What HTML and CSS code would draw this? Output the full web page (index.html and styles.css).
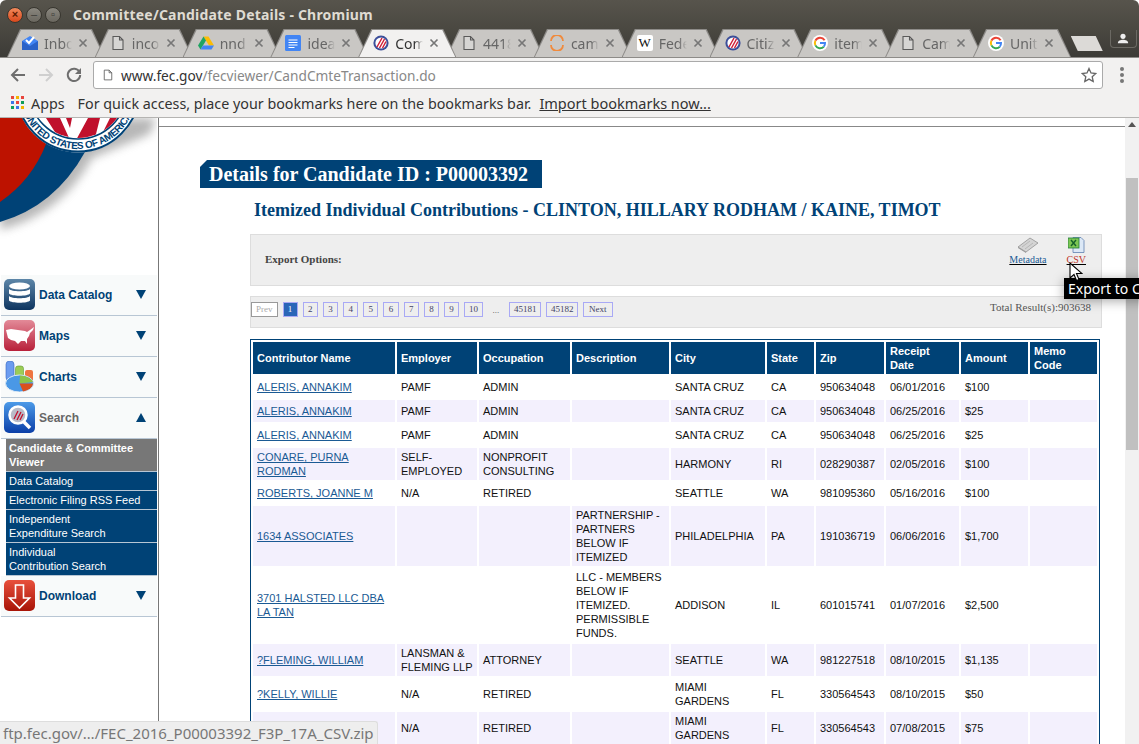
FILE: index.html
```html
<!DOCTYPE html>
<html lang="en" dir="ltr">
<head>
  <meta charset="UTF-8">
  <meta name="viewport" content="width=device-width, initial-scale=1.0">
  <title>Committee/Candidate Details - Chromium</title>
  <link rel="stylesheet" href="styles.css">
</head>
<body>
  <svg class="defs" width="0" height="0">
    <symbol id="i-doc" viewBox="0 0 16 16"><path d="M3 1.5h6.5L13 5v9.5H3z M9.5 1.5V5H13" fill="#fff" fill-opacity="0.25" stroke="#5a5a5a" stroke-width="1.1"/></symbol>
    <symbol id="i-fec" viewBox="0 0 16 16"><circle cx="8" cy="8" r="7.6" fill="#3c4f9a"/><circle cx="8" cy="8" r="5.6" fill="#fff"/><path d="M4 12L9 3M6.5 13L11.5 4M9.5 13L13 6.5" stroke="#d0213a" stroke-width="1.5"/></symbol>
    <symbol id="i-g" viewBox="0 0 16 16"><circle cx="8" cy="8" r="8" fill="#fff"/><path d="M12.6 5.2A5.3 5.3 0 0 0 3.4 5.6" fill="none" stroke="#ea4335" stroke-width="2"/><path d="M3.4 5.6a5.3 5.3 0 0 0 0 4.8" fill="none" stroke="#fbbc05" stroke-width="2"/><path d="M3.4 10.4A5.3 5.3 0 0 0 11.8 11.7" fill="none" stroke="#34a853" stroke-width="2"/><path d="M8 8h5c0 1.500-.4 2.800-1.200 3.700" fill="none" stroke="#4285f4" stroke-width="2"/></symbol>
    <symbol id="i-x" viewBox="0 0 10 10"><path d="M1.500 1.500l7 7M8.500 1.500l-7 7" stroke="#777" stroke-width="1.700"/></symbol>
  </svg>

  <div class="window">
    <div class="titlebar">
      <span class="dot dot-close">×</span>
      <span class="dot dot-min">–</span>
      <span class="dot dot-max">▫</span>
      <span class="wintitle">Committee/Candidate Details - Chromium</span>
    </div>

    <div class="tabstrip">
      <div class="tab">
        <svg class="favicon" viewBox="0 0 16 16"><path d="M0 6l8-5 8 5v9H0z" fill="#4285f4"/><path d="M0 6l8 5 8-5v9H0z" fill="#2a62c8"/><path d="M4 5l3 3 5-6" fill="none" stroke="#fff" stroke-width="2"/></svg>
        <span class="tabtext">Inbox</span>
        <svg class="tabclose"><use href="#i-x"/></svg>
      </div>
      <div class="tab">
        <svg class="favicon"><use href="#i-doc"/></svg>
        <span class="tabtext">income</span>
        <svg class="tabclose"><use href="#i-x"/></svg>
      </div>
      <div class="tab">
        <svg class="favicon" viewBox="0 0 16 16"><path d="M5.500 1.500h5L16 10.500h-5z" fill="#fbbc05"/><path d="M5.500 1.500L0 10.500l2.500 4L8 5.500z" fill="#1fa463"/><path d="M2.500 14.500h11L16 10.500H5z" fill="#4285f4"/></svg>
        <span class="tabtext">nnd</span>
        <svg class="tabclose"><use href="#i-x"/></svg>
      </div>
      <div class="tab">
        <svg class="favicon" viewBox="0 0 16 16"><rect width="16" height="16" rx="1.500" fill="#4285f4"/><path d="M3.500 5h9M3.500 7.500h9M3.500 10h9M3.500 12.500h6" stroke="#fff"/></svg>
        <span class="tabtext">ideas</span>
        <svg class="tabclose"><use href="#i-x"/></svg>
      </div>
      <div class="tab tab-active">
        <svg class="favicon"><use href="#i-fec"/></svg>
        <span class="tabtext">Committee</span>
        <svg class="tabclose"><use href="#i-x"/></svg>
      </div>
      <div class="tab">
        <svg class="favicon"><use href="#i-doc"/></svg>
        <span class="tabtext">4418</span>
        <svg class="tabclose"><use href="#i-x"/></svg>
      </div>
      <div class="tab">
        <svg class="favicon" viewBox="0 0 16 16"><path d="M2 6a6 6 0 0 1 12 0M14 10a6 6 0 0 1-12 0" fill="none" stroke="#f08a3c" stroke-width="1.800"/></svg>
        <span class="tabtext">camp</span>
        <svg class="tabclose"><use href="#i-x"/></svg>
      </div>
      <div class="tab">
        <span class="favicon fav-w">W</span>
        <span class="tabtext">Federal</span>
        <svg class="tabclose"><use href="#i-x"/></svg>
      </div>
      <div class="tab">
        <svg class="favicon"><use href="#i-fec"/></svg>
        <span class="tabtext">Citizens</span>
        <svg class="tabclose"><use href="#i-x"/></svg>
      </div>
      <div class="tab">
        <svg class="favicon"><use href="#i-g"/></svg>
        <span class="tabtext">itemized</span>
        <svg class="tabclose"><use href="#i-x"/></svg>
      </div>
      <div class="tab">
        <svg class="favicon"><use href="#i-doc"/></svg>
        <span class="tabtext">Campaign</span>
        <svg class="tabclose"><use href="#i-x"/></svg>
      </div>
      <div class="tab">
        <svg class="favicon"><use href="#i-g"/></svg>
        <span class="tabtext">United</span>
        <svg class="tabclose"><use href="#i-x"/></svg>
      </div>
      <div class="newtab"></div>
      <div class="profile">
        <svg width="12" height="11" viewBox="0 0 14 12"><circle cx="7" cy="3.500" r="3" fill="#eee"/><path d="M1 11.500c0-3 3-4 6-4s6 1 6 4z" fill="#eee"/></svg>
      </div>
    </div>

    <div class="toolbar">
      <svg class="navicon" viewBox="0 0 16 16"><path d="M15 8H2M8 2L2 8l6 6" fill="none" stroke="#6e6e6e" stroke-width="2"/></svg>
      <svg class="navicon" viewBox="0 0 16 16"><path d="M1 8h13M8 2l6 6-6 6" fill="none" stroke="#cfcfcf" stroke-width="2"/></svg>
      <svg class="navicon" viewBox="0 0 16 16"><path d="M13.500 5A6.200 6.200 0 1 0 14.200 8" fill="none" stroke="#6e6e6e" stroke-width="2"/><path d="M15 1v6H9z" fill="#6e6e6e"/></svg>
      <div class="omnibox">
        <svg class="omni-doc" width="12" height="14"><use href="#i-doc"/></svg>
        <span class="url"><b>www.fec.gov</b>/fecviewer/CandCmteTransaction.do</span>
        <svg class="star" width="16" height="16" viewBox="0 0 16 16"><path d="M8 1.500l2 4.500 4.800.5-3.600 3.200 1 4.800L8 12.100l-4.200 2.400 1-4.800L1.200 6.500 6 6z" fill="none" stroke="#666" stroke-width="1.300"/></svg>
      </div>
      <div class="menudots"><i></i><i></i><i></i></div>
    </div>

    <div class="bookmarks">
      <svg class="appsgrid" width="13" height="14" viewBox="0 0 13 14">
        <path d="M0 0h3v3H0z" fill="#e8453c"/><path d="M5 0h3v3H5z" fill="#f4b400"/><path d="M10 0h3v3h-3z" fill="#e8453c"/>
        <path d="M0 5h3v3H0z" fill="#3b78e7"/><path d="M5 5h3v3H5z" fill="#e8453c"/><path d="M10 5h3v3h-3z" fill="#0f9d58"/>
        <path d="M0 10h3v3H0z" fill="#0f9d58"/><path d="M5 10h3v3H5z" fill="#3b78e7"/><path d="M10 10h3v3h-3z" fill="#f4b400"/>
      </svg>
      <span class="apps">Apps</span>
      <span class="bm-hint">For quick access, place your bookmarks here on the bookmarks bar.</span>
      <span class="bm-link">Import bookmarks now...</span>
    </div>

    <div class="page">
      <aside class="sidebar">
        <svg class="seal" width="157" height="157" viewBox="0 0 157 157">
          <defs>
            <filter id="blur5"><feGaussianBlur stdDeviation="5"/></filter>
            <clipPath id="sealinner"><circle cx="78" cy="-28" r="48"/></clipPath>
            <path id="sealarc" d="M19 -28 A59 59 0 0 0 137 -28"/>
          </defs>
          <path d="M0 112Q62 96 92 40L150 16L156 0H0z" fill="#888" opacity="0.6" filter="url(#blur5)"/>
          <path d="M0 104Q55 88 85 34L60 0H0z" fill="#004276"/>
          <path d="M0 84Q32 62 46 26L30 0H0z" fill="#bd1200"/>
          <circle cx="78" cy="-28" r="62.500" fill="#fff"/>
          <circle cx="78" cy="-28" r="61.500" fill="none" stroke="#004276" stroke-width="2"/>
          <circle cx="78" cy="-28" r="49" fill="#fff" stroke="#004276" stroke-width="1.500"/>
          <g clip-path="url(#sealinner)">
            <path d="M46 0H60L70 22H60zM66 0H72L70 10zM88 0H100L94 24H75zM110 0H122L106 24H98z" fill="#c0102c"/>
          </g>
          <text class="seal-text" textLength="135"><textPath href="#sealarc" startOffset="13.500%">UNITED STATES OF AMERICA</textPath></text>
        </svg>

        <nav class="menu">
          <div class="menu-item">
            <svg class="menu-icon" viewBox="0 0 31 31">
              <defs><linearGradient id="gnavy" x1="0" y1="0" x2="0" y2="1"><stop offset="0" stop-color="#5d86a8"/><stop offset="1" stop-color="#0e3560"/></linearGradient></defs>
              <rect width="31" height="31" rx="5" fill="url(#gnavy)"/>
              <ellipse cx="15.500" cy="7" rx="10.500" ry="3.500" fill="#fff"/>
              <path d="M5 10c2 3 19 3 21 0v4.500c-2 3-19 3-21 0zM5 17c2 3 19 3 21 0v4.500c-2 3-19 3-21 0z" fill="#fff"/>
            </svg>
            <span class="menu-label">Data Catalog</span>
            <span class="arrow-down"></span>
          </div>
          <div class="menu-item">
            <svg class="menu-icon" viewBox="0 0 31 31">
              <defs><linearGradient id="gred" x1="0" y1="0" x2="0" y2="1"><stop offset="0" stop-color="#e38a98"/><stop offset="1" stop-color="#b8203a"/></linearGradient></defs>
              <rect width="31" height="31" rx="5" fill="url(#gred)"/>
              <path d="M2 10L7 9L14 10L21 11L23 12L26 10L30 7L29 10L26 13L25 16L23 19L23 24L21 21L17 21L14 24L11 21L7 20L4 18z" fill="#fff"/>
            </svg>
            <span class="menu-label">Maps</span>
            <span class="arrow-down"></span>
          </div>
          <div class="menu-item">
            <svg class="menu-icon" viewBox="0 0 31 31">
              <rect x="2" y="0" width="8" height="20" rx="3.500" fill="#6b9cf0" stroke="#3566c0" stroke-width="0.600"/>
              <rect x="11.500" y="5" width="8" height="14" rx="2.500" fill="#9ccc55" stroke="#5f9a30" stroke-width="0.600"/>
              <rect x="21" y="9" width="8" height="12" rx="2" fill="#ee7440"/>
              <ellipse cx="15.500" cy="22.500" rx="14" ry="8.500" fill="#4a98e6" stroke="#dbe8f5"/>
              <path d="M15.500 22.500L16 14.500A14 8.500 0 0 1 29 21z" fill="#8bc34a"/>
              <path d="M15.500 22.500H29A14 8.500 0 0 1 19 30.500z" fill="#d9501e"/>
            </svg>
            <span class="menu-label">Charts</span>
            <span class="arrow-down"></span>
          </div>
          <div class="menu-item menu-open">
            <svg class="menu-icon" viewBox="0 0 31 31">
              <defs><linearGradient id="gblue" x1="0" y1="0" x2="0" y2="1"><stop offset="0" stop-color="#4c9ae8"/><stop offset="1" stop-color="#0b3fa8"/></linearGradient></defs>
              <rect width="31" height="31" rx="5" fill="url(#gblue)"/>
              <path d="M19 19l7 7" stroke="#fff" stroke-width="3.500"/>
              <circle cx="14" cy="13" r="8.500" fill="#b9bcc8" stroke="#fff" stroke-width="2.500"/>
              <path d="M10 17l4-8M13 18l4-8M16 18l3-6" stroke="#c0102c" stroke-width="1.300"/>
            </svg>
            <span class="menu-label">Search</span>
            <span class="arrow-up"></span>
          </div>
          <ul class="submenu">
            <li class="sub-active">Candidate &amp; Committee Viewer</li>
            <li>Data Catalog</li>
            <li>Electronic Filing RSS Feed</li>
            <li>Independent<br>Expenditure Search</li>
            <li>Individual<br>Contribution Search</li>
          </ul>
          <div class="menu-item">
            <svg class="menu-icon" viewBox="0 0 31 31">
              <defs><linearGradient id="gdl" x1="0" y1="0" x2="0" y2="1"><stop offset="0" stop-color="#e8503c"/><stop offset="1" stop-color="#a81408"/></linearGradient></defs>
              <rect width="31" height="31" rx="5" fill="url(#gdl)"/>
              <path d="M11.500 5h8v13h6L15.500 28 5.500 18h6z" fill="none" stroke="#fff" stroke-width="1.600"/>
            </svg>
            <span class="menu-label">Download</span>
            <span class="arrow-down"></span>
          </div>
        </nav>
      </aside>

      <main class="content">
        <div class="topline"></div>
        <h1 class="page-title">Details for Candidate ID : P00003392</h1>
        <h2 class="sub-title">Itemized Individual Contributions - CLINTON, HILLARY RODHAM / KAINE, TIMOT</h2>

        <div class="export-box">
          <span class="export-label">Export Options:</span>
          <div class="export-links">
            <a class="export-link">
              <svg width="22" height="16" viewBox="0 0 22 16"><path d="M1 10L13 1l8 5-12 9z" fill="#d4d4d4" stroke="#888" stroke-width="0.700"/><path d="M1 10l8 5v1l-8-5z" fill="#999"/><path d="M5 10l8-6M8 12l8-6" stroke="#aaa" stroke-width="0.700"/></svg>
              <span class="link-meta">Metadata</span>
            </a>
            <a class="export-link">
              <svg width="17" height="16" viewBox="0 0 17 16"><path d="M5 .5h8l3 3v12H5z" fill="#dce8f6" stroke="#5f82b0" stroke-width="0.800"/><rect x="0" y="1" width="11" height="10" fill="#7cc653" stroke="#1f7a3a" stroke-width="0.800"/><path d="M3 3l5 6M8 3l-5 6" stroke="#14602a" stroke-width="1.400"/></svg>
              <span class="link-csv">CSV</span>
            </a>
          </div>
        </div>

        <div class="pager-box">
          <div class="pager">
            <span class="pg pg-prev">Prev</span>
            <span class="pg pg-on">1</span>
            <span class="pg">2</span>
            <span class="pg">3</span>
            <span class="pg">4</span>
            <span class="pg">5</span>
            <span class="pg">6</span>
            <span class="pg">7</span>
            <span class="pg">8</span>
            <span class="pg">9</span>
            <span class="pg">10</span>
            <span class="pg-dots">...</span>
            <span class="pg">45181</span>
            <span class="pg">45182</span>
            <span class="pg pg-next">Next</span>
          </div>
          <span class="total">Total Result(s):903638</span>
        </div>

        <table class="results">
          <colgroup>
            <col class="c-name"><col class="c-emp"><col class="c-occ"><col class="c-desc"><col class="c-city">
            <col class="c-state"><col class="c-zip"><col class="c-date"><col class="c-amt"><col class="c-memo">
          </colgroup>
          <thead>
            <tr><th>Contributor Name</th><th>Employer</th><th>Occupation</th><th>Description</th><th>City</th><th>State</th><th>Zip</th><th>Receipt Date</th><th>Amount</th><th>Memo Code</th></tr>
          </thead>
          <tbody>
            <tr><td><a>ALERIS, ANNAKIM</a></td><td>PAMF</td><td>ADMIN</td><td></td><td>SANTA CRUZ</td><td>CA</td><td>950634048</td><td>06/01/2016</td><td>$100</td><td></td></tr>
            <tr><td><a>ALERIS, ANNAKIM</a></td><td>PAMF</td><td>ADMIN</td><td></td><td>SANTA CRUZ</td><td>CA</td><td>950634048</td><td>06/25/2016</td><td>$25</td><td></td></tr>
            <tr><td><a>ALERIS, ANNAKIM</a></td><td>PAMF</td><td>ADMIN</td><td></td><td>SANTA CRUZ</td><td>CA</td><td>950634048</td><td>06/25/2016</td><td>$25</td><td></td></tr>
            <tr><td><a>CONARE, PURNA RODMAN</a></td><td>SELF-EMPLOYED</td><td>NONPROFIT CONSULTING</td><td></td><td>HARMONY</td><td>RI</td><td>028290387</td><td>02/05/2016</td><td>$100</td><td></td></tr>
            <tr><td><a>ROBERTS, JOANNE M</a></td><td>N/A</td><td>RETIRED</td><td></td><td>SEATTLE</td><td>WA</td><td>981095360</td><td>05/16/2016</td><td>$100</td><td></td></tr>
            <tr><td><a>1634 ASSOCIATES</a></td><td></td><td></td><td>PARTNERSHIP - PARTNERS BELOW IF ITEMIZED</td><td>PHILADELPHIA</td><td>PA</td><td>191036719</td><td>06/06/2016</td><td>$1,700</td><td></td></tr>
            <tr><td><a>3701 HALSTED LLC DBA LA TAN</a></td><td></td><td></td><td>LLC - MEMBERS BELOW IF ITEMIZED. PERMISSIBLE FUNDS.</td><td>ADDISON</td><td>IL</td><td>601015741</td><td>01/07/2016</td><td>$2,500</td><td></td></tr>
            <tr><td><a>?FLEMING, WILLIAM</a></td><td>LANSMAN &amp; FLEMING LLP</td><td>ATTORNEY</td><td></td><td>SEATTLE</td><td>WA</td><td>981227518</td><td>08/10/2015</td><td>$1,135</td><td></td></tr>
            <tr><td><a>?KELLY, WILLIE</a></td><td>N/A</td><td>RETIRED</td><td></td><td>MIAMI GARDENS</td><td>FL</td><td>330564543</td><td>08/10/2015</td><td>$50</td><td></td></tr>
            <tr><td><a>?KELLY, WILLIE</a></td><td>N/A</td><td>RETIRED</td><td></td><td>MIAMI GARDENS</td><td>FL</td><td>330564543</td><td>07/08/2015</td><td>$75</td><td></td></tr>
          </tbody>
        </table>
      </main>

      <div class="scrollbar">
        <span class="scroll-up"></span>
        <div class="scroll-thumb"></div>
      </div>
    </div>

    <div class="tooltip">Export to CSV</div>
    <svg class="cursor" width="14" height="20" viewBox="0 0 14 20"><path d="M1 1v15l4-3.500 2.500 6 2.500-1-2.500-6H13z" fill="#fff" stroke="#000" stroke-width="1.100"/></svg>
    <div class="statusbubble">ftp.fec.gov/…/FEC_2016_P00003392_F3P_17A_CSV.zip</div>
  </div>
</body>
</html>
```

FILE: styles.css
```css
* {
  box-sizing: border-box;
}
html, body {
  margin: 0;
  padding: 0;
  background: white;
}
.defs {
  position: absolute;
}
.window {
  position: relative;
  width: 1139px;
  height: 744px;
  overflow: hidden;
  display: flex;
  flex-direction: column;
  font-family: "Liberation Sans", Arial, sans-serif;
}

/* browser chrome */
.titlebar {
  height: 29px;
  display: flex;
  align-items: center;
  padding-left: 7px;
  background: linear-gradient(#57544c, #4a4841);
  border-radius: 6px 6px 0 0;
}
.dot {
  width: 16px;
  height: 16px;
  border-radius: 50%;
  margin-right: 3px;
  display: flex;
  align-items: center;
  justify-content: center;
  font-size: 11px;
  line-height: 1;
  color: #3c3b37;
  background: linear-gradient(#8a877f, #6a675f);
  border: 1px solid #38362f;
}
.dot-close {
  background: linear-gradient(#f28a5c, #d9481c);
  color: #5a1a00;
  font-weight: bold;
}
.wintitle {
  margin-left: 9px;
  font-family: "Noto Sans", sans-serif;
  font-weight: bold;
  font-size: 14px;
  letter-spacing: 0.2px;
  color: #dfdbd2;
}
.tabstrip {
  height: 28px;
  display: flex;
  padding-left: 7px;
  background: linear-gradient(#4a4841, #3c3b37);
}
.tab {
  position: relative;
  width: 98px;
  height: 28px;
  margin-right: -10.200px;
  padding-left: 15px;
  display: flex;
  align-items: center;
  background: #8d8b88;
  clip-path: polygon(0 100%, 13px 0, calc(100% - 13px) 0, 100% 100%);
}
.tab::before {
  content: "";
  position: absolute;
  inset: 1px 1px 0 1px;
  background: #c9c7c4;
  clip-path: polygon(0 100%, 13px 0, calc(100% - 13px) 0, 100% 100%);
}
.tab > * {
  position: relative;
}
.tab-active {
  z-index: 2;
}
.tab-active::before {
  background: #f2f1f0;
}
.favicon {
  width: 16px;
  height: 16px;
  flex: none;
}
.fav-w {
  background: white;
  border-radius: 2px;
  font-family: "Liberation Serif", serif;
  font-size: 13px;
  line-height: 16px;
  text-align: center;
  color: #111;
}
.tabtext {
  width: 28px;
  margin-left: 6px;
  overflow: hidden;
  white-space: nowrap;
  font-family: "Noto Sans", sans-serif;
  font-size: 14px;
  color: #666;
  -webkit-mask-image: linear-gradient(to right, black 70%, transparent);
  mask-image: linear-gradient(to right, black 70%, transparent);
}
.tab-active .tabtext {
  color: #333;
}
.tabclose {
  width: 10px;
  height: 10px;
  margin-left: 6px;
}
.newtab {
  width: 32px;
  height: 15px;
  margin: 7px 0 0 10px;
  background: #dcdad7;
  clip-path: polygon(0 0, 25px 0, 100% 100%, 7px 100%);
}
.profile {
  width: 27px;
  height: 18px;
  margin: 1px 0 0 7px;
  display: flex;
  align-items: center;
  justify-content: center;
  border: 1px solid #6b6963;
  border-top: none;
  border-radius: 0 0 4px 4px;
}
.toolbar {
  height: 32px;
  display: flex;
  align-items: center;
  padding: 3px 0 0 10px;
  background: #f2f1f0;
  border-top: 1px solid #8d8b88;
}
.navicon {
  width: 16px;
  height: 16px;
  margin-right: 12px;
}
.omnibox {
  width: 1010px;
  height: 28px;
  margin-left: -1px;
  display: flex;
  align-items: center;
  padding: 0 5px 0 8px;
  background: white;
  border: 1px solid #aaa;
  border-radius: 3px;
}
.omni-doc {
  margin-right: 7px;
}
.url {
  font-family: "Noto Sans", sans-serif;
  font-size: 13.700px;
  color: #888;
}
.url b {
  font-weight: normal;
  color: #333;
}
.star {
  margin-left: auto;
}
.menudots {
  margin-left: 17px;
  display: flex;
  flex-direction: column;
  gap: 2px;
}
.menudots i {
  width: 4px;
  height: 4px;
  border-radius: 50%;
  background: #777;
}
.bookmarks {
  height: 29px;
  display: flex;
  align-items: center;
  padding-left: 11px;
  background: #f2f1f0;
  border-bottom: 1px solid #b5b4b2;
  font-family: "Noto Sans", sans-serif;
  font-size: 14.300px;
  color: #333;
}
.apps {
  margin-left: 7px;
}
.bm-hint {
  margin-left: 13px;
}
.bm-link {
  margin-left: 8px;
  font-size: 14.500px;
  text-decoration: underline;
}

/* page */
.page {
  flex: 1;
  display: flex;
  min-height: 0;
}
.sidebar {
  width: 159px;
  flex: none;
  border-right: 1px solid #777;
  background: white;
}
.seal {
  display: block;
}
.seal-text {
  font-family: "Liberation Sans", sans-serif;
  font-weight: bold;
  font-size: 10px;
  fill: #004276;
}
.menu {
  margin-left: 1px;
  width: 156px;
}
.menu-item {
  height: 41px;
  display: flex;
  align-items: center;
  padding: 0 11px 1px 3px;
  background: #f8fafa;
  border-bottom: 1px solid #b8c6d4;
}
.menu-icon {
  width: 31px;
  height: 31px;
  flex: none;
}
.menu-label {
  margin-left: 4px;
  font-size: 12px;
  font-weight: bold;
  color: #004276;
}
.menu-open .menu-label {
  color: #666;
}
.arrow-down, .arrow-up {
  margin-left: auto;
  width: 0;
  height: 0;
  border-left: 5px solid transparent;
  border-right: 5px solid transparent;
}
.arrow-down {
  border-top: 9px solid #004276;
}
.arrow-up {
  border-bottom: 9px solid #004276;
}
.submenu {
  list-style: none;
  margin: 0 0 0 5px;
  padding: 0;
  font-size: 11px;
  line-height: 14px;
  color: white;
}
.submenu li {
  padding: 2px 3px;
  background: #004276;
  border-bottom: 1px solid #b8c6d4;
  box-sizing: content-box;
}
.submenu .sub-active {
  background: #777;
  font-weight: bold;
}
.content {
  flex: 1;
  min-width: 0;
}
.topline {
  height: 9px;
  border-bottom: 1px solid #888;
}
.page-title {
  width: 342px;
  height: 28px;
  margin: 33px 0 0 41px;
  padding-left: 9px;
  background: #004276;
  clip-path: polygon(7px 0, 100% 0, 100% 100%, 0 100%, 0 7px);
  font-family: "Liberation Serif", serif;
  font-size: 20px;
  line-height: 28px;
  font-weight: bold;
  color: white;
  white-space: nowrap;
}
.sub-title {
  margin: 11px 0 0 95px;
  font-family: "Liberation Serif", serif;
  font-size: 18px;
  line-height: 22px;
  font-weight: bold;
  color: #004276;
  white-space: nowrap;
}
.export-box {
  width: 852px;
  height: 52px;
  margin: 13px 0 0 91px;
  display: flex;
  align-items: center;
  padding: 0 15px 2px 14px;
  background: #eee;
  border: 1px solid #ddd;
  font-family: "Liberation Serif", serif;
}
.export-label {
  font-size: 11px;
  font-weight: bold;
  color: #444;
}
.export-links {
  margin: 2px 0 0 auto;
  align-self: flex-start;
  display: flex;
  gap: 20px;
}
.export-link {
  display: flex;
  flex-direction: column;
  align-items: center;
  gap: 1px;
  font-size: 10px;
  text-decoration: underline;
}
.link-meta {
  color: #1a5a94;
}
.link-csv {
  color: #c0392b;
}
.pager-box {
  width: 852px;
  height: 32px;
  margin: 10px 0 0 91px;
  display: flex;
  align-items: flex-start;
  padding: 5px 10px 0 0;
  background: #eee;
  border: 1px solid #ddd;
  font-family: "Liberation Serif", serif;
}
.pager {
  display: flex;
  gap: 5px;
  align-items: center;
}
.pg {
  min-width: 15.200px;
  height: 15px;
  padding: 0 3.700px;
  border: 1px solid #a9a9f5;
  font-size: 9px;
  line-height: 13px;
  text-align: center;
  color: #446;
}
.pg-prev {
  padding: 0 4px;
  background: white;
  border-color: #999;
  color: #aaa;
}
.pg-next {
  padding: 0 5px;
}
.pg-on {
  background: #2a66b8;
  color: white;
}
.pg-dots {
  padding: 0 5px;
  font-size: 9px;
  color: #555;
}
.total {
  margin: -2px 0 0 auto;
  font-size: 11px;
  line-height: 14px;
  color: #555;
}
.results {
  width: 850px;
  margin: 11px 0 0 91px;
  table-layout: fixed;
  border-collapse: separate;
  border-spacing: 2px;
  border: 1px solid #004276;
  font-size: 11px;
  line-height: 14px;
  color: #111;
}
.c-name { width: 142px; }
.c-emp { width: 80px; }
.c-occ { width: 91px; }
.c-desc { width: 97px; }
.c-city { width: 94px; }
.c-state { width: 47px; }
.c-zip { width: 68px; }
.c-date { width: 73px; }
.c-amt { width: 67px; }
.c-memo { width: 67px; }
.results th {
  padding: 2px 4px;
  height: 32px;
  background: #004276;
  color: white;
  text-align: left;
  font-weight: bold;
}
.results td {
  padding: 2px 4px;
  height: 22px;
}
.results tbody tr:nth-child(even) td {
  background: #f3f0fd;
}
.results a {
  color: #1a5a94;
  text-decoration: underline;
}
.scrollbar {
  width: 14px;
  flex: none;
  background: #f1f1f1;
  padding-top: 4px;
  display: flex;
  flex-direction: column;
  align-items: center;
}
.scroll-up {
  width: 0;
  height: 0;
  border-left: 4px solid transparent;
  border-right: 4px solid transparent;
  border-bottom: 5px solid #555;
}
.scroll-thumb {
  width: 12px;
  height: 272px;
  margin-top: 51px;
  background: #c0c0c0;
}

/* overlays */
.tooltip {
  position: absolute;
  left: 1064px;
  top: 278px;
  width: 120px;
  height: 21px;
  padding-left: 4px;
  background: black;
  box-shadow: 0 2px 12px rgba(0,0,0,0.35);
  font-family: "Noto Sans", sans-serif;
  font-size: 14px;
  line-height: 21px;
  color: white;
  white-space: nowrap;
}
.cursor {
  position: absolute;
  left: 1069px;
  top: 262px;
}
.statusbubble {
  position: absolute;
  left: 0;
  bottom: 0;
  width: 378px;
  height: 23px;
  padding-left: 3px;
  background: #eee;
  border: 1px solid #ddd;
  border-left: none;
  border-bottom: none;
  border-radius: 0 3px 0 0;
  font-family: "Noto Sans", sans-serif;
  font-size: 15px;
  line-height: 22px;
  color: #777;
  white-space: nowrap;
}
```
